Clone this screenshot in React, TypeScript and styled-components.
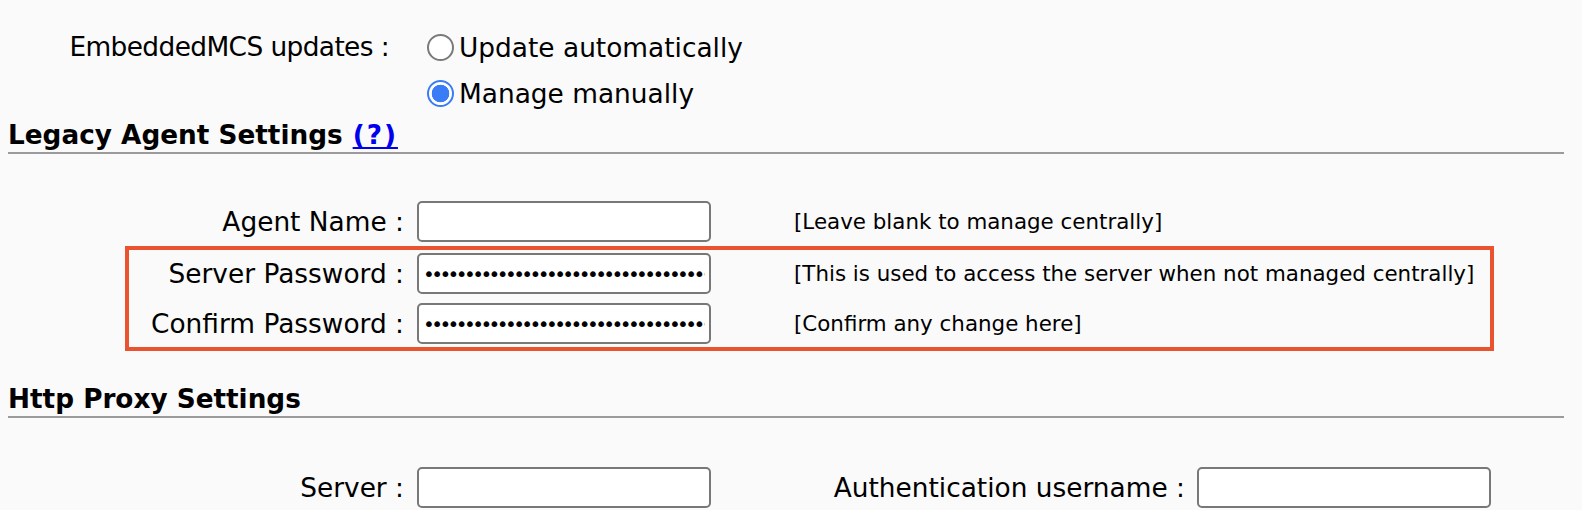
import React from 'react';
import styled, { createGlobalStyle } from 'styled-components';

const GlobalStyle = createGlobalStyle`
  html, body {
    margin: 0;
    padding: 0;
    background: #fafafa;
  }
  body {
    font-family: "DejaVu Sans", Verdana, sans-serif;
    color: #000;
  }
`;

const Page = styled.div`
  width: 1582px;
  height: 510px;
  overflow: hidden;
  padding: 24px 18px 0 8px;
  box-sizing: border-box;
`;

const RadioTable = styled.div`
  display: grid;
  grid-template-columns: 381px auto;
  column-gap: 38px;
`;

const RadioLabel = styled.div`
  font-size: 26.4px;
  letter-spacing: -0.6px;
  height: 46px;
  line-height: 46px;
  text-align: right;
  white-space: nowrap;
`;

const RadioList = styled.div`
  display: flex;
  flex-direction: column;
`;

const RadioOption = styled.label`
  display: flex;
  align-items: center;
  gap: 5px;
  height: 46px;
  font-size: 26.4px;
  white-space: nowrap;
`;

const RadioDot = styled.input`
  appearance: none;
  margin: 0;
  width: 27px;
  height: 27px;
  border-radius: 50%;
  box-sizing: border-box;
  border: 2px solid #7a7a7a;
  background: #fff;
  &:checked {
    border: 2px solid #3a7cf5;
    background: radial-gradient(circle, #3a7cf5 0 8.5px, #fff 9.1px);
  }
`;

const SectionTitle = styled.h2<{ $top?: number }>`
  margin: ${(p) => p.$top ?? 0}px 0 0;
  padding-top: 2px;
  font-size: 26.3px;
  font-weight: bold;
  line-height: 34px;
  height: 34px;
  border-bottom: 2px solid #9b9b9b;
  white-space: nowrap;
`;

const HelpLink = styled.a`
  color: #0000ee;
  text-decoration: underline;
  text-underline-offset: 3px;
  letter-spacing: 2px;
  margin-left: 10px;
`;

const Table = styled.div<{ $top: number }>`
  margin-top: ${(p) => p.$top}px;
`;

const Row = styled.div<{ $label: number; $h: number }>`
  display: grid;
  grid-template-columns: ${(p) => p.$label}px 294px auto;
  align-items: center;
  height: ${(p) => p.$h}px;
`;

const ProxyRow = styled.div`
  display: grid;
  grid-template-columns: 409px 294px 486px 294px;
  align-items: center;
  height: 50px;
`;

const Label = styled.div<{ $pad?: number }>`
  font-size: 26.4px;
  text-align: right;
  padding-right: ${(p) => p.$pad ?? 13}px;
  white-space: nowrap;
`;

const Field = styled.input`
  box-sizing: border-box;
  width: 294px;
  height: 41px;
  margin: 0;
  border: 2px solid #787878;
  border-radius: 5px;
  background: #fff;
  padding: 0 4px;
  font-family: "DejaVu Sans", sans-serif;
  font-size: 20px;
  letter-spacing: -3.6px;
  color: #000;
  outline: none;
`;

const Hint = styled.div`
  font-size: 21.4px;
  padding-left: 83px;
  white-space: nowrap;
`;

const Highlight = styled.div`
  margin-left: 117px;
  width: 1369px;
  box-sizing: border-box;
  border: 4px solid #e9532f;
  padding: 3px 0 3px;
  display: flex;
  flex-direction: column;
  gap: 9px;
`;

const secret = '••••••••••••••••••••••••••••••••••••••••';

export default function App() {
  return (
    <>
      <GlobalStyle />
      <Page>
        <RadioTable>
          <RadioLabel>EmbeddedMCS updates :</RadioLabel>
          <RadioList>
            <RadioOption>
              <RadioDot type="radio" name="mcs" readOnly />
              Update automatically
            </RadioOption>
            <RadioOption>
              <RadioDot type="radio" name="mcs" defaultChecked />
              Manage manually
            </RadioOption>
          </RadioList>
        </RadioTable>

        <SectionTitle>
          Legacy Agent Settings<HelpLink href="#">(?)</HelpLink>
        </SectionTitle>

        <Table $top={43}>
          <Row $label={409} $h={49}>
            <Label>Agent Name :</Label>
            <Field type="text" readOnly />
            <Hint>[Leave blank to manage centrally]</Hint>
          </Row>
          <Highlight>
            <Row $label={288} $h={41}>
              <Label>Server Password :</Label>
              <Field type="password" defaultValue={secret} readOnly />
              <Hint>[This is used to access the server when not managed centrally]</Hint>
            </Row>
            <Row $label={288} $h={41}>
              <Label>Confirm Password :</Label>
              <Field type="password" defaultValue={secret} readOnly />
              <Hint>[Confirm any change here]</Hint>
            </Row>
          </Highlight>
        </Table>

        <SectionTitle $top={29}>Http Proxy Settings</SectionTitle>

        <Table $top={44}>
          <ProxyRow>
            <Label>Server :</Label>
            <Field type="text" readOnly />
            <Label $pad={12}>Authentication username :</Label>
            <Field type="text" readOnly />
          </ProxyRow>
        </Table>
      </Page>
    </>
  );
}
